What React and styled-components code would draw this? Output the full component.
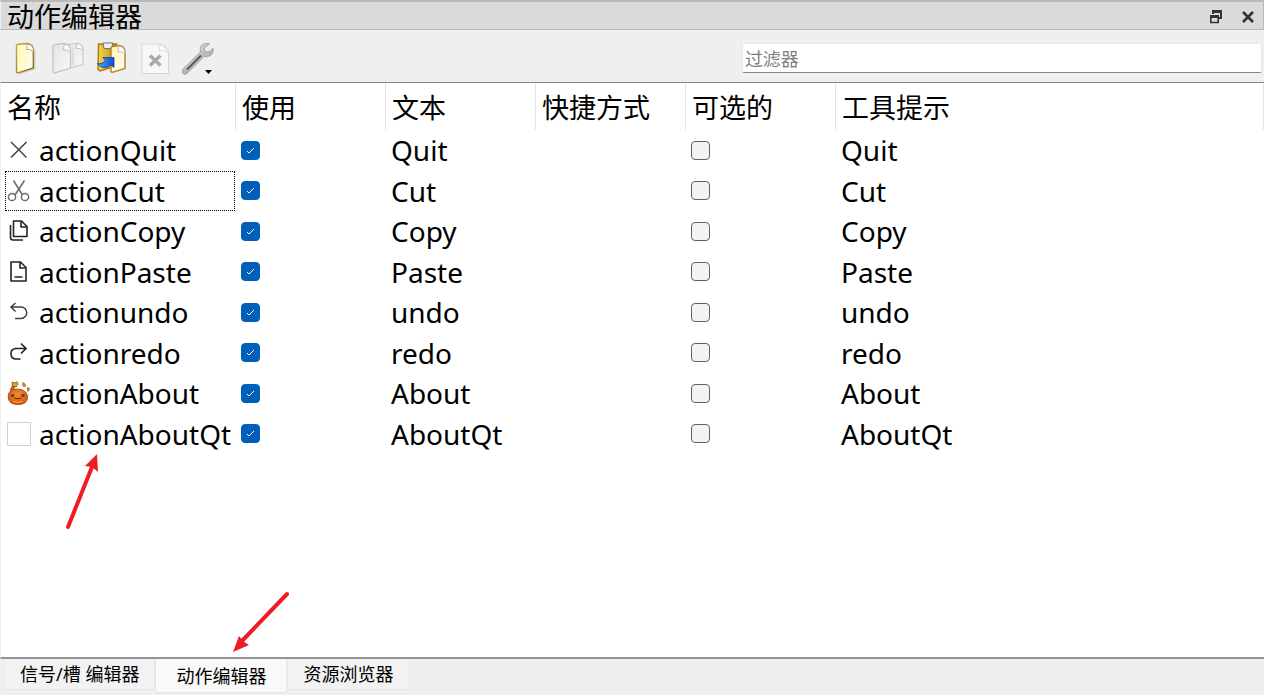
import React from "react";
import styled, { createGlobalStyle, css } from "styled-components";

const Global = createGlobalStyle`
  *, *::before, *::after { box-sizing: border-box; }
  body {
    margin: 0;
    background: #efefef;
    color: #000;
    font-family: "Noto Sans", "Noto Sans CJK SC", sans-serif;
  }
  button, input { font-family: inherit; }
`;

const Dock = styled.div`
  display: flex;
  flex-direction: column;
  min-height: 100vh;
`;

const TitleBar = styled.header`
  display: flex;
  align-items: center;
  justify-content: space-between;
  height: 30px;
  padding: 3px 7px 0 6px;
  background: #dadada;
  border: 1px solid #b9b9b9;
  border-top-width: 2px;
  border-left-color: #efefef;
`;

const Title = styled.h1`
  margin: 0;
  font-size: 27px;
  line-height: 28px;
  font-weight: 400;
`;

const WindowButtons = styled.div`
  display: flex;
  gap: 16px;
`;

const IconButton = styled.button`
  display: flex;
  padding: 0;
  border: 0;
  background: none;
  color: inherit;
`;

const Toolbar = styled.div`
  display: flex;
  align-items: center;
  justify-content: space-between;
  height: 52px;
  padding: 4px 2px 0 8px;
`;

const Tools = styled.div`
  display: flex;
  gap: 7px;
`;

const Filter = styled.input`
  width: calc(41% + 6px);
  height: 30px;
  padding: 2px 2px 0;
  border: 1px solid #e8e8e8;
  border-bottom-color: #868686;
  border-radius: 2px;
  background: #fff;
  font-size: 18px;
  outline: 0;
  &::placeholder { color: #7f7f7f; opacity: 1; }
`;

const ListPanel = styled.main`
  position: relative;
  flex: 1;
  border-top: 1px solid #828790;
  border-bottom: 2px solid #92949b;
  border-left: 1px solid #efefef;
  background: #fff;
`;

const ActionTable = styled.table`
  width: 100%;
  table-layout: fixed;
  border-collapse: separate;
  border-spacing: 0;
  font-size: 28px;
  line-height: 36px;
`;

const Col = styled.col`
  width: ${(p) => (p.$w ? `${p.$w}px` : "auto")};
`;

const HeadCell = styled.th`
  height: 47px;
  padding: 3px 6px 0;
  border-right: 1px solid #e4e4e4;
  font-size: 27px;
  font-weight: 400;
  text-align: left;
  white-space: nowrap;
`;

const Row = styled.tr`
  height: 41px;
  &:nth-child(odd) { height: 40px; }
`;

const Cell = styled.td`
  padding: 0 5px;
  white-space: nowrap;
`;

const NameCell = styled(Cell)`
  padding: 0 1px 0 4px;
`;

const NameBox = styled.div`
  display: flex;
  align-items: center;
  gap: 8px;
  height: 40px;
  padding-left: 1px;
  border: 1px dotted ${(p) => (p.$focused ? "#000" : "transparent")};
`;

const Check = styled.input`
  appearance: none;
  display: block;
  width: 19px;
  height: 19px;
  margin: 0;
  border: 1px solid #626262;
  border-radius: 4px;
  background: #f3f3f3;
  ${(p) => p.checked && css`
    border-color: #005fb8;
    background: #005fb8 url("data:image/svg+xml,%3Csvg xmlns='http://www.w3.org/2000/svg' viewBox='0 0 17 17'%3E%3Cpath d='M5 9l2 2 5-5' fill='none' stroke='white'/%3E%3C/svg%3E");
  `}
`;

const Tabs = styled.nav`
  display: flex;
  align-items: flex-start;
  height: 36px;
  padding-left: 4px;
`;

const Tab = styled.button`
  height: ${(p) => (p.$active ? 34 : 31)}px;
  padding: 0 ${(p) => (p.$active ? 20 : 15)}px;
  border: 1px solid ${(p) => (p.$active ? "#e5e5e5" : "#ececec")};
  border-top: 0;
  border-bottom-color: #e2e2e2;
  border-radius: 0 0 3px 3px;
  background: ${(p) => (p.$active ? "#f9f9f9" : "#f2f2f2")};
  color: #000;
  font-size: 18px;
  line-height: 24px;
  white-space: nowrap;
`;

const NameArrow = styled.svg`
  position: absolute;
  left: 64px;
  top: 370px;
`;

const TabArrow = styled.svg`
  position: absolute;
  left: 230px;
  bottom: 3px;
`;

const Svg = ({ size = 24, children, ...rest }) => (
  <svg width={size} height={size} viewBox={`0 0 ${size} ${size}`} fill="none" aria-hidden="true" {...rest}>
    {children}
  </svg>
);

const FloatIcon = () => (
  <Svg size={16} stroke="#333" strokeWidth="2">
    <path d="M5 5V3h8v6h-2" />
    <path d="M4 2.5h10" strokeWidth="3" />
    <path d="M2.8 7.5h7.4v6H2.8z" strokeWidth="1.6" />
    <path d="M2 7.5h9" strokeWidth="3" />
  </Svg>
);

const CloseIcon = () => (
  <Svg size={16} stroke="#333" strokeWidth="2.6">
    <path d="M3 3l10 10M13 3L3 13" />
  </Svg>
);

const Gradients = () => (
  <defs>
    <linearGradient id="cream" x1="0" y1="0" x2="1" y2="1">
      <stop stopColor="#fff7b0" /><stop offset="1" stopColor="#fffdf0" />
    </linearGradient>
    <linearGradient id="edge" x1="0" y1="0" x2="1" y2="1">
      <stop stopColor="#c9a24a" /><stop offset="1" stopColor="#8f681d" />
    </linearGradient>
    <linearGradient id="board" x1="0" y1="0" x2="1" y2="0">
      <stop stopColor="#f4d54e" /><stop offset="1" stopColor="#b98a12" />
    </linearGradient>
    <linearGradient id="blue" x1="0" y1="0" x2="1" y2="0">
      <stop stopColor="#3bb2ef" /><stop offset="1" stopColor="#1648dc" />
    </linearGradient>
    <linearGradient id="grey" x1="0" y1="0" x2="1" y2="1">
      <stop stopColor="#e4e4e4" /><stop offset="1" stopColor="#f7f7f7" />
    </linearGradient>
    <linearGradient id="steel" x1="0" y1="0" x2="1" y2="1">
      <stop stopColor="#f2f2f2" /><stop offset="1" stopColor="#8b8b8b" />
    </linearGradient>
    <radialGradient id="orange" cx=".5" cy=".35" r=".65">
      <stop stopColor="#fa8a2c" /><stop offset="1" stopColor="#d9560c" />
    </radialGradient>
  </defs>
);

const NewIcon = () => (
  <Svg size={36}>
    <Gradients />
    <path d="M10 6L22 5l5.500 5v19L11 34.500z" fill="#999" opacity=".4" />
    <path d="M8.500 6Q8.500 4.500 10 4.300L20 3.500Q25.500 5 25.300 11V28L10 32.800Q8.500 33 8.500 31.500Z" fill="url(#cream)" stroke="url(#edge)" strokeWidth="1.400" />
    <path d="M19.500 4q-.5 3-1 5.500 4-1.500 6.800 2.500Q26 5 19.500 4z" fill="#fff" stroke="#9f9b90" strokeWidth=".8" />
  </Svg>
);

const CopyToolIcon = () => (
  <Svg size={36} stroke="#c4c4c4">
    <path d="M17 6V4.500l9-1.200Q32 4 32 10v14.500L19 28z" fill="url(#grey)" />
    <path d="M26 3.500l-1 5q4-1 7 2Q32 4 26 3.500z" fill="#fafafa" />
    <path d="M22 8v17" stroke="#ddd" strokeWidth="2" />
    <path d="M2 6.500Q2 5 3.500 4.700L13.500 3.500Q19.500 5 19.500 11V28L3.500 33Q2 33 2 31.500z" fill="url(#grey)" strokeWidth="1.300" />
    <path d="M13.500 4l-1.500 6q4-1.500 7.500 2.500Q20 5 13.500 4z" fill="#fafafa" />
  </Svg>
);

const PasteToolIcon = () => (
  <Svg size={36}>
    <path d="M4.500 4h18v22L6 31l-2-1.500z" fill="url(#board)" stroke="#a87b13" strokeWidth="1.400" />
    <path d="M9 3h10l-1.500 5.500H10z" fill="#eee" stroke="#77736a" />
    <path d="M17 8.500q0-2 2-2l6-1Q31 6 31 13v15.500l-13 4-1-1z" fill="url(#cream)" stroke="#b78735" strokeWidth="1.500" />
    <path d="M25 6l-1 6q4-1.500 7 2Q31 7 25 6z" fill="#fff" stroke="#aaa" strokeWidth=".8" />
    <path d="M3 23.500q6 1 8.500-3L9 17.500h11v10L17 25Q10 31 3 23.500z" fill="url(#blue)" stroke="#123da7" strokeWidth=".8" />
  </Svg>
);

const DeleteIcon = () => (
  <Svg size={36}>
    <path d="M5 4h19.500L31.500 10.500V33.500H5z" fill="#f7f7f7" stroke="#d6d6d6" />
    <path d="M23.500 4.500l-1.500 6q5-1.500 9 2v-2l-7-6z" fill="#fff" stroke="#d9d9d9" />
    <path d="M13 15.500l10.500 10M23.500 15.500L13 25.500" stroke="#a9a9a9" strokeWidth="3.400" />
  </Svg>
);

const WrenchIcon = () => (
  <Svg size={36}>
    <path d="M3 29L20.500 12q-1.500-6 3.500-8 3-1.500 5.500 0l-5 4 .5 4 5-.5 3-3.500q1 6-3.500 8-3 1-5.500.5L8 32.500q-2.500 3-4.500 1.500-2-2-.5-5z" fill="url(#steel)" stroke="#a2a2a2" strokeWidth=".9" />
    <path d="M7 29.500L21 15.500" stroke="#555" strokeWidth="1.800" />
    <circle cx="5" cy="32" r="1.200" fill="#fff" stroke="#888" strokeWidth=".8" />
    <path d="M25 30h7l-3.500 4z" fill="#000" />
  </Svg>
);

const QuitIcon = () => (
  <Svg stroke="#3c3c3c" strokeWidth="1.4"><path d="M4 4l15.500 15.500M19.500 4L4 19.500" /></Svg>
);

const CutIcon = () => (
  <Svg stroke="#646b76" strokeWidth="1.5">
    <path d="M6.500 1.500l9 14.500M17.500 1.500L8 16" />
    <circle cx="5" cy="18" r="3.600" /><circle cx="18" cy="18" r="3.600" />
  </Svg>
);

const CopyIcon = () => (
  <Svg stroke="#222" strokeWidth="1.6" strokeLinejoin="round">
    <path d="M6.500 2h8l5.500 5.500V17.500H6.500z" /><path d="M14 2v6h6" /><path d="M3.500 6v12.500q0 2.500 2.500 2.500h10" />
  </Svg>
);

const PasteIcon = () => (
  <Svg stroke="#222" strokeWidth="1.6" strokeLinejoin="round">
    <path d="M4 2h9.500l5.500 5.500V21H4z" /><path d="M13 2v6h6M7.500 17h8" />
  </Svg>
);

const UndoIcon = () => (
  <Svg stroke="#3c3c3c" strokeWidth="1.5">
    <path d="M8.500 3L4 7 8.500 11.500M4 7H14a5.500 5.500 0 0 1 0 11.500H8" />
  </Svg>
);

const RedoIcon = () => (
  <Svg stroke="#222" strokeWidth="1.6">
    <path d="M14 2.500L19 7.500 14 12.500M19 7.500H8.500a5.300 5.300 0 0 0 0 10.500h5" />
  </Svg>
);

const AboutIcon = () => (
  <Svg>
    <path d="M3.500 11Q3 7 6 4.500L8 5.500Q6 7 7 10z" fill="#d9640f" stroke="#75401a" strokeWidth=".7" />
    <path d="M5 1l2.500 1L10 .8l1 2.400L9 6 5.500 5z" fill="#f2a51c" stroke="#684017" strokeWidth=".7" />
    <path d="M16 1.500q3 1 2.500 4-3 .5-3-1.500zM20 7q3-1 2.500 1.500L21 10.500z" fill="#f39a16" stroke="#76501e" strokeWidth=".6" />
    <path d="M1.200 16Q1.500 8.500 8 8.200q3-.2 6 .3 6 1.500 6.500 7.500 0 7.500-9.500 7.500T1.200 16z" fill="url(#orange)" stroke="#9a4510" strokeWidth=".9" />
    <ellipse cx="5.500" cy="14.500" rx="1.800" ry="1.600" fill="#3f4a50" />
    <ellipse cx="16" cy="14.500" rx="1.800" ry="1.600" fill="#3f4a50" />
    <path d="M7.500 17q3.500 1.800 7 0" stroke="#642508" />
    <path d="M6 20.500q5 1.500 10 0" stroke="#f9a440" />
  </Svg>
);

const BlankIcon = () => (
  <Svg><path d="M.5.5h23v23H.5z" fill="#fff" stroke="#d0d0d0" /></Svg>
);

const tools = [
  ["新建", NewIcon], ["复制", CopyToolIcon], ["粘贴", PasteToolIcon],
  ["删除", DeleteIcon], ["配置", WrenchIcon],
];

const headings = ["名称", "使用", "文本", "快捷方式", "可选的", "工具提示"];

const actions = [
  { name: "actionQuit", text: "Quit", Icon: QuitIcon },
  { name: "actionCut", text: "Cut", Icon: CutIcon, focused: true },
  { name: "actionCopy", text: "Copy", Icon: CopyIcon },
  { name: "actionPaste", text: "Paste", Icon: PasteIcon },
  { name: "actionundo", text: "undo", Icon: UndoIcon },
  { name: "actionredo", text: "redo", Icon: RedoIcon },
  { name: "actionAbout", text: "About", Icon: AboutIcon },
  { name: "actionAboutQt", text: "AboutQt", Icon: BlankIcon },
];

export default function App() {
  return (
    <Dock>
      <Global />
      <TitleBar>
        <Title>动作编辑器</Title>
        <WindowButtons>
          <IconButton aria-label="浮动"><FloatIcon /></IconButton>
          <IconButton aria-label="关闭"><CloseIcon /></IconButton>
        </WindowButtons>
      </TitleBar>
      <Toolbar>
        <Tools>
          {tools.map(([label, Icon]) => (
            <IconButton key={label} aria-label={label}><Icon /></IconButton>
          ))}
        </Tools>
        <Filter type="text" placeholder="过滤器" aria-label="过滤器" />
      </Toolbar>
      <ListPanel>
        <ActionTable>
          <colgroup>
            <Col $w={235} /><Col $w={150} /><Col $w={150} /><Col $w={150} /><Col $w={150} /><Col />
          </colgroup>
          <thead>
            <tr>{headings.map((h) => <HeadCell key={h} scope="col">{h}</HeadCell>)}</tr>
          </thead>
          <tbody>
            {actions.map(({ name, text, Icon, focused }) => (
              <Row key={name}>
                <NameCell><NameBox $focused={focused}><Icon />{name}</NameBox></NameCell>
                <Cell><Check type="checkbox" checked readOnly aria-label={`${name} 使用`} /></Cell>
                <Cell>{text}</Cell>
                <Cell />
                <Cell><Check type="checkbox" checked={false} readOnly aria-label={`${name} 可选的`} /></Cell>
                <Cell>{text}</Cell>
              </Row>
            ))}
          </tbody>
        </ActionTable>
        <NameArrow width="40" height="80" viewBox="0 0 40 80" aria-hidden="true">
          <path d="M3 74L27 14" stroke="#ee1c25" strokeWidth="4" strokeLinecap="round" />
          <path d="M32 1L33 19 27 14 20 13z" fill="#ee1c25" />
        </NameArrow>
        <TabArrow width="62" height="64" viewBox="0 0 62 64" aria-hidden="true">
          <path d="M56 4L10 52" stroke="#ee1c25" strokeWidth="4" strokeLinecap="round" />
          <path d="M2 62L8 46 12 51 18 55z" fill="#ee1c25" />
        </TabArrow>
      </ListPanel>
      <Tabs>
        <Tab>信号/槽 编辑器</Tab>
        <Tab $active>动作编辑器</Tab>
        <Tab>资源浏览器</Tab>
      </Tabs>
    </Dock>
  );
}
